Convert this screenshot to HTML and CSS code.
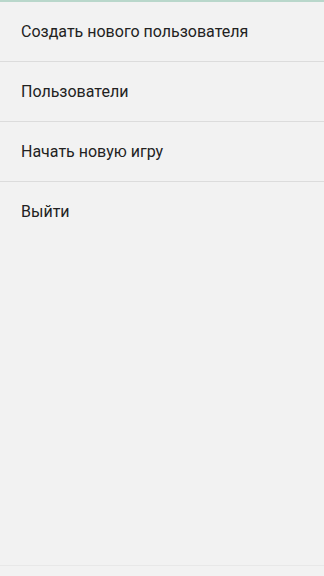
FILE: index.html
```html
<!DOCTYPE html>
<html lang="ru">
<head>
  <meta charset="UTF-8">
  <meta name="viewport" content="width=device-width, initial-scale=1.0">
  <title>Меню</title>
  <link rel="stylesheet" href="styles.css">
</head>
<body>
  <div class="screen">
    <div class="top-line"></div>
    <ul class="menu">
      <li class="menu-item">Создать нового пользователя</li>
      <li class="menu-item">Пользователи</li>
      <li class="menu-item">Начать новую игру</li>
      <li class="menu-item last">Выйти</li>
    </ul>
    <div class="bottom-line"></div>
  </div>
</body>
</html>
```

FILE: styles.css
```css
/* General */
html, body {
  margin: 0;
  padding: 0;
  height: 100%;
}

body {
  background-color: #f2f2f2;
  font-family: Roboto, "Noto Sans", Arial, sans-serif;
  color: #222;
}

.screen {
  display: flex;
  flex-direction: column;
  height: 576px;
}

.top-line {
  height: 2px;
  background-color: #b9d7cb;
}

/* Menu list */
.menu {
  list-style: none;
  margin: 0;
  padding: 0;
  flex-grow: 1;
}

.menu-item {
  height: 59px;
  display: flex;
  align-items: center;
  padding-left: 21px;
  padding-bottom: 1px;
  box-sizing: border-box;
  height: 60px;
  font-size: 16px;
  border-bottom: 1px solid #dcdcdc;
}

.menu-item.last {
  border-bottom: none;
}

.bottom-line {
  height: 1px;
  margin-bottom: 10px;
  background-color: #e8e8e8;
}
```
